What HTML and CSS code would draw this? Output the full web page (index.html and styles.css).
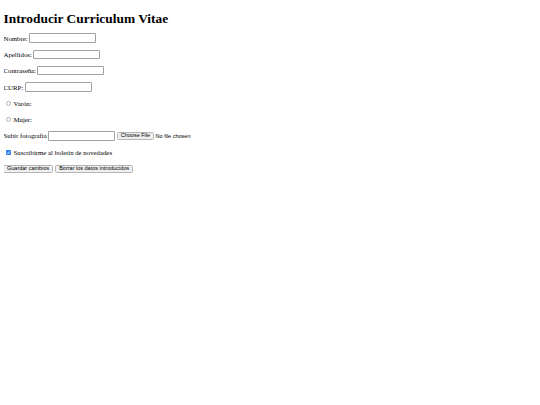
FILE: index.html
```html
<!DOCTYPE html>
<html lang="es">
<head>
<meta charset="utf-8">
<title>Introducir Curriculum Vitae</title>
<link rel="stylesheet" href="styles.css">
</head>
<body>
<h1 class="title">Introducir Curriculum Vitae</h1>
<form class="cv-form">
  <p class="row"><label>Nombre: <input class="field" type="text"></label></p>
  <p class="row"><label>Apellidos: <input class="field" type="text"></label></p>
  <p class="row"><label>Contraseña: <input class="field" type="password"></label></p>
  <p class="row"><label>CURP: <input class="field" type="text"></label></p>
  <p class="row"><label><span class="radio"></span>Varón:</label></p>
  <p class="row"><label><span class="radio"></span>Mujer:</label></p>
  <p class="row"><label>Subir fotografía <span class="field"></span></label><span class="file-btn">Choose File</span><span class="file-note">No file chosen</span></p>
  <p class="row"><label><span class="check"><svg viewBox="0 0 10 10" width="5" height="5"><path d="M2 5.2 L4.2 7.4 L8 2.8" fill="none" stroke="#ffffff" stroke-width="1.8"/></svg></span>Suscribirme al boletín de novedades</label></p>
  <p class="row"><button class="btn" type="button">Guardar cambios</button><button class="btn" type="button">Borrar los datos introducidos</button></p>
</form>
</body>
</html>
```

FILE: styles.css
```css
html, body {
  background: #ffffff;
}
body {
  margin: 4px 4px 4px 3.5px;
  font-family: "Liberation Serif", "Times New Roman", serif;
  font-size: 6.8px;
  color: #000000;
}
.title {
  font-size: 13.4px;
  font-weight: bold;
  margin: 7.5px 0 4.5px;
  line-height: 14px;
}
.row {
  margin: 0;
  height: 16.3px;
  display: flex;
  align-items: center;
  white-space: nowrap;
}
.row label {
  display: flex;
  align-items: center;
}
.field {
  display: inline-block;
  box-sizing: border-box;
  width: 67px;
  height: 9.5px;
  border: 1px solid #a0a0a0;
  border-radius: 1px;
  padding: 0;
  margin: 0 0 0 1.5px;
  background: #ffffff;
  font-size: 6px;
}
.radio {
  display: inline-block;
  box-sizing: border-box;
  width: 5px;
  height: 5px;
  border: 0.7px solid #b0b0b0;
  border-radius: 50%;
  margin: 0 3px 0 2px;
  background: #ffffff;
}
.check {
  display: inline-flex;
  align-items: center;
  justify-content: center;
  box-sizing: border-box;
  width: 5px;
  height: 5px;
  border-radius: 1px;
  background: #2b7de9;
  margin: 0 3px 0 2px;
}
.file-btn, .btn {
  display: inline-flex;
  align-items: center;
  box-sizing: border-box;
  font-family: "Liberation Sans", Arial, sans-serif;
  font-size: 5.5px;
  line-height: 1;
  height: 8px;
  padding: 0 3px;
  border: 0.8px solid #b5b5b5;
  border-radius: 1.5px;
  background: #efefef;
  color: #000000;
}
.btn:first-child {
  margin-left: -0.5px;
}
.file-btn {
  margin-left: 1.5px;
}
.file-note {
  font-family: "Liberation Sans", Arial, sans-serif;
  font-size: 5.5px;
  margin-left: 1.5px;
}
.btn {
  margin-right: 2px;
}
```
